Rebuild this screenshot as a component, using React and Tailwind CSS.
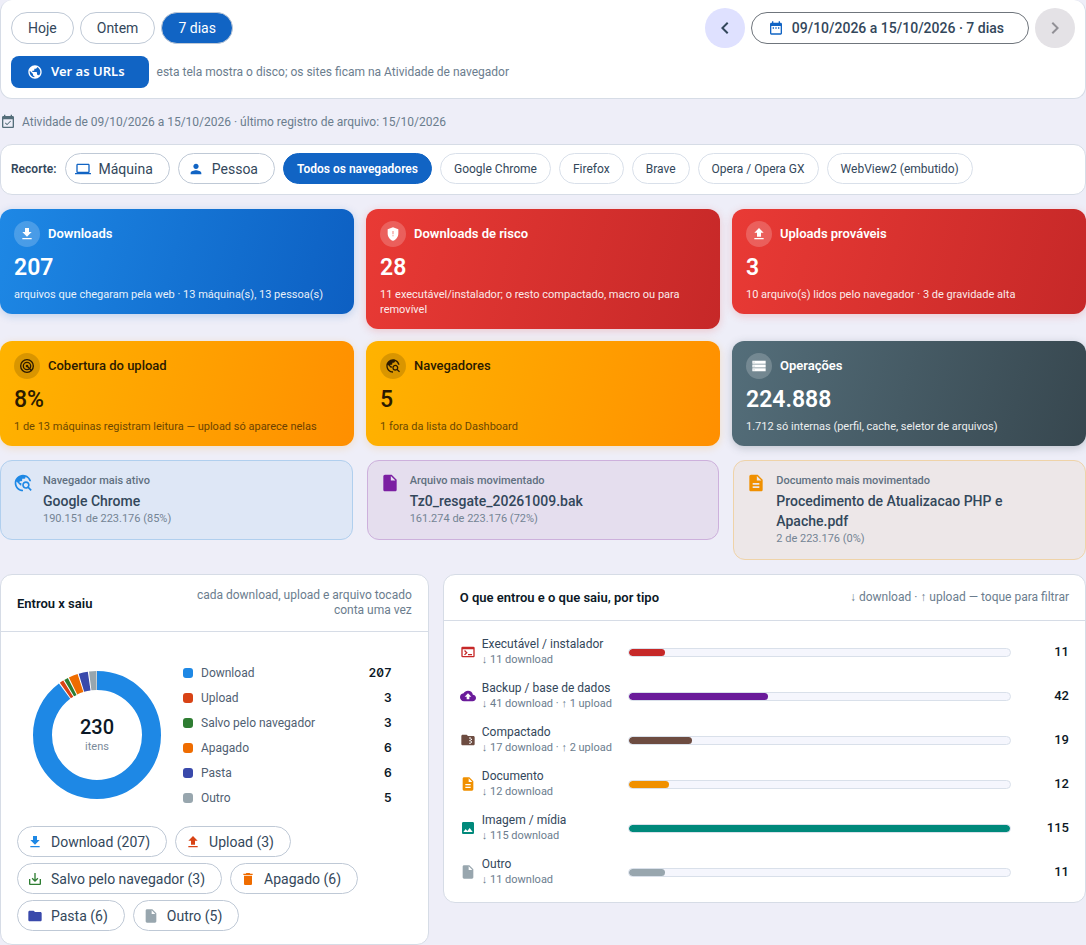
import React, { useState } from 'react';
import clsx from 'clsx';
import {
  MdBackup,
  MdChevronLeft,
  MdChevronRight,
  MdDateRange,
  MdDelete,
  MdDescription,
  MdDownload,
  MdEventAvailable,
  MdFolder,
  MdFolderZip,
  MdImage,
  MdInsertDriveFile,
  MdLaptop,
  MdPerson,
  MdPublic,
  MdSaveAlt,
  MdTerminal,
  MdTravelExplore,
  MdUpload,
} from 'react-icons/md';

const RadarIcon = ({ className }) => (
  <svg viewBox="0 0 24 24" className={className} fill="none" stroke="currentColor" strokeWidth="2">
    <circle cx="12" cy="12" r="9.5" />
    <circle cx="12" cy="12" r="5.5" />
    <circle cx="12" cy="12" r="2" fill="currentColor" stroke="none" />
    <path d="M12 12l7 7" />
  </svg>
);

const ShieldIcon = ({ className }) => (
  <svg viewBox="0 0 24 24" className={className} fill="currentColor">
    <path
      fillRule="evenodd"
      d="M12 2L4 5v6.09c0 5.05 3.41 9.76 8 10.91 4.59-1.15 8-5.86 8-10.91V5l-8-3zm-.6 5.5h1.2v5h-1.2v-5zm0 6.5h1.2v1.5h-1.2V14z"
    />
  </svg>
);

const StorageIcon = ({ className }) => (
  <svg viewBox="0 0 24 24" className={className} fill="currentColor">
    <path
      fillRule="evenodd"
      d="M2 4h20v4.5H2V4zm2 1.7v1.1h1.1V5.7H4zM2 9.8h20v4.5H2V9.8zm2 1.7v1.1h1.1v-1.1H4zm-2 4h20V20H2v-4.5zm2 1.7v1.1h1.1v-1.1H4z"
    />
  </svg>
);

const periods = ['Hoje', 'Ontem', '7 dias'];

const browsers = [
  'Todos os navegadores',
  'Google Chrome',
  'Firefox',
  'Brave',
  'Opera / Opera GX',
  'WebView2 (embutido)',
];

const stats = [
  {
    title: 'Downloads',
    value: '207',
    note: 'arquivos que chegaram pela web · 13 máquina(s), 13 pessoa(s)',
    icon: MdDownload,
    tone: 'blue',
  },
  {
    title: 'Downloads de risco',
    value: '28',
    note: '11 executável/instalador; o resto compactado, macro ou para removível',
    icon: ShieldIcon,
    tone: 'red',
  },
  {
    title: 'Uploads prováveis',
    value: '3',
    note: '10 arquivo(s) lidos pelo navegador · 3 de gravidade alta',
    icon: MdUpload,
    tone: 'red',
  },
  {
    title: 'Cobertura do upload',
    value: '8%',
    note: '1 de 13 máquinas registram leitura — upload só aparece nelas',
    icon: RadarIcon,
    tone: 'amber',
  },
  {
    title: 'Navegadores',
    value: '5',
    note: '1 fora da lista do Dashboard',
    icon: MdTravelExplore,
    tone: 'amber',
  },
  {
    title: 'Operações',
    value: '224.888',
    note: '1.712 só internas (perfil, cache, seletor de arquivos)',
    icon: StorageIcon,
    tone: 'slate',
  },
];

const tones = {
  blue: 'from-[#1e88e5] to-[#0d5fc2] text-white shadow-[0_2px_8px_rgba(21,101,192,0.22)]',
  red: 'from-[#e93a35] to-[#c62828] text-white shadow-[0_2px_8px_rgba(229,57,53,0.22)]',
  amber: 'from-[#ffb300] to-[#ff8f00] text-[#2b1a00] shadow-[0_2px_8px_rgba(255,160,0,0.2)]',
  slate: 'from-[#546e7a] to-[#37474f] text-white shadow-[0_2px_8px_rgba(55,71,79,0.25)]',
};

const highlights = [
  {
    label: 'Navegador mais ativo',
    value: 'Google Chrome',
    note: '190.151 de 223.176 (85%)',
    icon: MdTravelExplore,
    box: 'bg-[#dee7f6] border-[#b0cfee]',
    color: 'text-[#1e88e5]',
  },
  {
    label: 'Arquivo mais movimentado',
    value: 'Tz0_resgate_20261009.bak',
    note: '161.274 de 223.176 (72%)',
    icon: MdInsertDriveFile,
    box: 'bg-[#e5deee] border-[#cdb0dc]',
    color: 'text-[#7b1fa2]',
  },
  {
    label: 'Documento mais movimentado',
    value: 'Procedimento de Atualizacao PHP e Apache.pdf',
    note: '2 de 223.176 (0%)',
    icon: MdDescription,
    box: 'bg-[#ede7e8] border-[#efd3a8]',
    color: 'text-[#f09000]',
  },
];

const kinds = [
  { name: 'Download', count: 207, hex: '#1e88e5', icon: MdDownload },
  { name: 'Upload', count: 3, hex: '#d84315', icon: MdUpload },
  { name: 'Salvo pelo navegador', count: 3, hex: '#2e7d32', icon: MdSaveAlt },
  { name: 'Apagado', count: 6, hex: '#ef6c00', icon: MdDelete },
  { name: 'Pasta', count: 6, hex: '#3949ab', icon: MdFolder },
  { name: 'Outro', count: 5, hex: '#98a6ae', icon: MdInsertDriveFile },
];

const types = [
  { name: 'Executável / instalador', note: '↓ 11 download', total: 11, hex: '#c62828', icon: MdTerminal },
  { name: 'Backup / base de dados', note: '↓ 41 download · ↑ 1 upload', total: 42, hex: '#6a1b9a', icon: MdBackup },
  { name: 'Compactado', note: '↓ 17 download · ↑ 2 upload', total: 19, hex: '#6d4c41', icon: MdFolderZip },
  { name: 'Documento', note: '↓ 12 download', total: 12, hex: '#f09000', icon: MdDescription },
  { name: 'Imagem / mídia', note: '↓ 115 download', total: 115, hex: '#00897b', icon: MdImage },
  { name: 'Outro', note: '↓ 11 download', total: 11, hex: '#98a6ae', icon: MdInsertDriveFile },
];

const Donut = ({ items }) => {
  const total = items.reduce((sum, i) => sum + i.count, 0);
  const radius = 54.5;
  const length = 2 * Math.PI * radius;
  let start = 0;

  return (
    <div className="relative size-32 shrink-0">
      <svg viewBox="0 0 128 128" className="size-32 -rotate-90">
        {items.map((item) => {
          const part = (item.count / total) * length;
          const offset = -start;
          start += part;
          return (
            <circle
              key={item.name}
              cx="64"
              cy="64"
              r={radius}
              fill="none"
              stroke={item.hex}
              strokeWidth="19"
              strokeDasharray={`${part - 1} ${length - part + 1}`}
              strokeDashoffset={offset}
            />
          );
        })}
      </svg>
      <div className="absolute inset-0 flex flex-col items-center justify-center">
        <span className="text-xl leading-6 font-medium text-[#0b1826]">{total}</span>
        <span className="text-[11px] leading-4 text-[#7a8a9a]">itens</span>
      </div>
    </div>
  );
};

const ChipButton = ({ icon: Icon, color, children }) => (
  <button className="flex h-[31px] items-center gap-2 rounded-full border border-[#bfc9d6] bg-white pr-4 pl-[9px] text-sm">
    <Icon className="size-4" style={{ color }} />
    {children}
  </button>
);

const StatCard = ({ title, value, note, icon: Icon, tone }) => (
  <section className={clsx('rounded-xl bg-linear-105 px-3.5 py-3', tones[tone])}>
    <div className="flex items-center gap-2">
      <span
        className={clsx(
          'flex size-6.5 items-center justify-center rounded-full',
          tone === 'amber' ? 'bg-black/15' : 'bg-white/20'
        )}
      >
        <Icon className="size-4" />
      </span>
      <h3 className={clsx('text-[13px]', tone === 'amber' ? 'font-medium' : 'font-semibold')}>{title}</h3>
    </div>
    <p className={clsx('mt-1.5 text-[23px] leading-[30px]', tone === 'amber' ? 'font-medium' : 'font-semibold')}>{value}</p>
    <p className={clsx('mt-1 text-[11px] leading-[15px]', tone === 'amber' ? 'opacity-70' : 'opacity-90')}>{note}</p>
  </section>
);

const Panel = ({ title, hint, children }) => (
  <section className="rounded-xl border border-[#d6dce6] bg-white">
    <header className="flex items-center justify-between gap-4 border-b border-[#d6dce6] px-4 py-[13px]">
      <h2 className="text-[13px] leading-[19px] font-semibold text-[#0b1826]">{title}</h2>
      <p className="max-w-[224px] text-right text-xs leading-[15px] text-[#6b7d8e]">{hint}</p>
    </header>
    {children}
  </section>
);

const App = () => {
  const [period, setPeriod] = useState('7 dias');
  const [browser, setBrowser] = useState('Todos os navegadores');

  const max = Math.max(...types.map((t) => t.total));

  return (
    <main className="min-h-screen bg-[#eeeef8] font-['Roboto','Liberation_Sans',sans-serif] text-[#33475b]">
      {/* Period */}
      <section className="flex flex-col gap-2 rounded-xl border border-t-0 border-[#d6dce6] bg-white px-2.5 pt-2 pb-2.5">
        <div className="flex items-center justify-between">
          <div className="flex gap-1.5">
            {periods.map((p) => (
              <button
                key={p}
                onClick={() => setPeriod(p)}
                className={clsx(
                  'h-8 rounded-full border border-[#bfc9d6] px-4 text-sm',
                  p === period ? 'bg-[#1164c4] text-white' : 'bg-white'
                )}
              >
                {p}
              </button>
            ))}
          </div>
          <div className="flex items-center gap-1.5">
            <button aria-label="Período anterior" className="flex size-10 items-center justify-center rounded-full bg-[#dfe1ff]">
              <MdChevronLeft className="size-6" />
            </button>
            <button className="flex h-8 items-center gap-2 rounded-full border border-[#6f757c] pr-6 pl-4 text-sm font-medium">
              <MdDateRange className="size-4 text-[#1164c4]" />
              09/10/2026 a 15/10/2026 · 7 dias
            </button>
            <button
              aria-label="Próximo período"
              disabled
              className="flex size-10 items-center justify-center rounded-full bg-[#e4e2e6] text-[#919096]"
            >
              <MdChevronRight className="size-6" />
            </button>
          </div>
        </div>
        <div className="flex items-center gap-2">
          <button className="flex h-8 items-center gap-2 rounded-lg bg-[#1164c4] pr-6 pl-4 font-['Noto_Sans',sans-serif] text-[13px] font-semibold text-white">
            <MdPublic className="size-4" />
            Ver as URLs
          </button>
          <p className="text-xs text-[#6b7d8e]">esta tela mostra o disco; os sites ficam na Atividade de navegador</p>
        </div>
      </section>

      <p className="flex items-center gap-1.5 pt-[15px] pb-3.5 text-xs leading-4 text-[#6b7d8e]">
        <MdEventAvailable className="size-4 text-[#546e7a]" />
        Atividade de 09/10/2026 a 15/10/2026 · último registro de arquivo: 15/10/2026
      </p>

      {/* Filters */}
      <section className="flex flex-wrap items-center gap-2 rounded-xl border border-[#d6dce6] bg-white px-2.5 pt-2 pb-2.5">
        <span className="text-xs font-semibold">Recorte:</span>
        <ChipButton icon={MdLaptop} color="#1164c4">
          Máquina
        </ChipButton>
        <ChipButton icon={MdPerson} color="#1164c4">
          Pessoa
        </ChipButton>
        {browsers.map((b) => (
          <button
            key={b}
            onClick={() => setBrowser(b)}
            className={clsx(
              'h-[31px] rounded-full border px-[13px] text-xs',
              b === browser ? 'border-[#1164c4] bg-[#1164c4] font-semibold text-white' : 'border-[#d9e0ea] bg-white'
            )}
          >
            {b}
          </button>
        ))}
      </section>

      {/* Totals */}
      <div className="mt-3.5 grid grid-cols-3 items-start gap-3">
        {stats.map((s) => (
          <StatCard key={s.title} {...s} />
        ))}
      </div>

      <div className="mt-3.5 grid grid-cols-3 items-start gap-3.5">
        {highlights.map(({ icon: Icon, ...h }) => (
          <section key={h.label} className={clsx('flex gap-2.5 rounded-xl border p-3', h.box)}>
            <Icon className={clsx('size-5 shrink-0', h.color)} />
            <div>
              <p className="text-[11px] leading-4 font-medium text-[#607080]">{h.label}</p>
              <p className="mt-0.5 text-sm leading-5 font-medium">{h.value}</p>
              <p className="text-[11px] leading-4 text-[#748494]">{h.note}</p>
            </div>
          </section>
        ))}
      </div>

      <div className="mt-3.5 grid grid-cols-[2fr_3fr] items-start gap-3.5">
        <Panel title="Entrou x saiu" hint="cada download, upload e arquivo tocado conta uma vez">
          <div className="flex items-center gap-[22px] pt-7 pr-9 pb-4 pl-8">
            <Donut items={kinds} />
            <ul className="flex-1">
              {kinds.map((k) => (
                <li key={k.name} className="flex h-[25px] items-center gap-2 text-xs">
                  <span className="size-2.5 rounded-[3px]" style={{ backgroundColor: k.hex }} />
                  <span className="text-[#4f6072]">{k.name}</span>
                  <span className="ml-auto font-['Inter',sans-serif] font-semibold text-[#0b1826] tabular-nums slashed-zero">
                    {k.count}
                  </span>
                </li>
              ))}
            </ul>
          </div>
          <div className="flex flex-wrap gap-x-2 gap-y-1.5 px-4 pb-[13px]">
            {kinds.map((k) => (
              <ChipButton key={k.name} icon={k.icon} color={k.hex}>
                {k.name} ({k.count})
              </ChipButton>
            ))}
          </div>
        </Panel>

        <Panel title="O que entrou e o que saiu, por tipo" hint="↓ download · ↑ upload — toque para filtrar">
          <ul className="flex flex-col gap-3 px-4 pt-[15px] pb-3.5">
            {types.map(({ icon: Icon, ...t }) => (
              <li key={t.name} className="flex items-center">
                <Icon className="mr-1.5 size-4" style={{ color: t.hex }} />
                <div className="mr-3 w-[134px]">
                  <p className="text-xs leading-4">{t.name}</p>
                  <p className="text-[11px] leading-4 text-[#6b7d8e]">{t.note}</p>
                </div>
                <div className="h-[9px] flex-1 overflow-hidden rounded-full border border-[#d9e0ea] bg-[#f5f6fd]">
                  <div
                    className="h-full rounded-full"
                    style={{ width: `${(t.total / max) * 100}%`, backgroundColor: t.hex }}
                  />
                </div>
                <span className="w-[58px] text-right text-[13px] font-medium text-[#0b1826] tabular-nums">{t.total}</span>
              </li>
            ))}
          </ul>
        </Panel>
      </div>
    </main>
  );
};

export default App;
